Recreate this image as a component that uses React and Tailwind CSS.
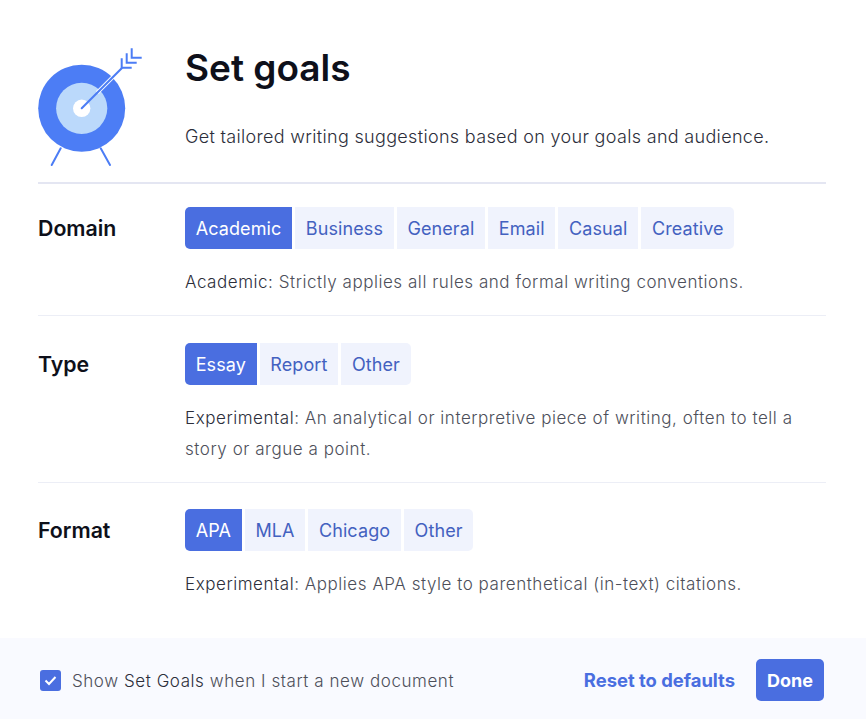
const BLUE = "bg-[#4a6ee0]";

function Target() {
  return (
    <svg width="106" height="120" viewBox="0 0 106 120" fill="none">
      <path d="M22.7 102.3L13.7 119M62.7 102.3L72 119" stroke="#4c7df5" strokeWidth="2" strokeLinecap="round" />
      <circle cx="43.7" cy="62.3" r="43.5" fill="#4c7df5" />
      <circle cx="43.7" cy="62.3" r="25.6" fill="#bbd9fb" />
      <circle cx="43.7" cy="62.3" r="8.7" fill="#fff" />
      <path d="M59.3 46.7L75.3 30.7" stroke="#fff" strokeWidth="4" />
      <path d="M43.7 62.3L83.7 22.3" stroke="#4c7df5" strokeWidth="2" strokeLinecap="round" />
      <path d="M83.7 12.3V21.7H93.7M88.7 7.3V16.7H98.7M93.7 2.3V11.7H103.7" stroke="#4c7df5" strokeWidth="2" />
    </svg>
  );
}

function Chips({ items }) {
  return (
    <div className="flex gap-[3px]">
      {items.map((item, index) => (
        <div
          key={item}
          className={`h-[42px] px-[10.7px] flex items-center text-[18px] tracking-[0.1px] ${
            index === 0 ? `${BLUE} text-white rounded-l-[5px]` : "bg-[#f0f3fd] text-[#4361c0]"
          } ${index === items.length - 1 ? "rounded-r-[5px]" : ""}`}
        >
          {item}
        </div>
      ))}
    </div>
  );
}

function Row({ label, items, children, className }) {
  return (
    <div className={`flex ${className}`}>
      <div className="w-[147px] text-[21.3px] font-semibold text-[#0e101a] leading-[42px]">{label}</div>
      <div className="flex-1">
        <Chips items={items} />
        <p className="mt-[18px] text-[17px] tracking-[0.54px] leading-[31px] font-light text-[#4d4f5a]">{children}</p>
      </div>
    </div>
  );
}

export default function App() {
  return (
    <div className="w-[866px] h-[719px] bg-white flex flex-col font-['Inter',sans-serif]">
      <div className="flex-1 pl-[38px] pr-[40px]">
        <div className="h-[184px] flex border-b-2 border-[#e4e6f2]">
          <div className="w-[147px] pt-[46px] shrink-0">
            <Target />
          </div>
          <div>
            <h1 className="mt-[42px] text-[37px] leading-[52px] font-semibold text-[#0e101a]">Set goals</h1>
            <p className="mt-[29px] text-[18px] tracking-[0.32px] leading-[28px] font-[350] text-[#2c2e3a]">
              Get tailored writing suggestions based on your goals and audience.
            </p>
          </div>
        </div>
        <Row
          label="Domain"
          items={["Academic", "Business", "General", "Email", "Casual", "Creative"]}
          className="pt-[23px] h-[132px] border-b border-[#eceef6]"
        >
          <span className="font-[350] text-[#2c2e3a]">Academic:</span> Strictly applies all rules and formal writing conventions.
        </Row>
        <Row
          label="Type"
          items={["Essay", "Report", "Other"]}
          className="pt-[27px] h-[167px] border-b border-[#eceef6]"
        >
          <span className="font-[350] text-[#2c2e3a]">Experimental</span>: An analytical or interpretive piece of writing, often to tell a story or argue a point.
        </Row>
        <Row label="Format" items={["APA", "MLA", "Chicago", "Other"]} className="pt-[26px]">
          <span className="font-[350] text-[#2c2e3a]">Experimental</span>: Applies APA style to parenthetical (in-text) citations.
        </Row>
      </div>
      <div className="h-[81px] bg-[#f9faff] pt-[3px] pl-[40px] pr-[42px] flex items-center">
        <div className={`w-[21px] h-[21px] rounded-[3px] ${BLUE} flex items-center justify-center`}>
          <svg width="13" height="11" viewBox="0 0 13 11" fill="none">
            <path d="M1.5 5.5L5 9L11.5 2" stroke="#fff" strokeWidth="2" />
          </svg>
        </div>
        <p className="ml-[11px] pt-[3px] text-[17px] tracking-[0.56px] font-light text-[#4d4f5a]">
          Show <span className="font-[350] text-[#2c2e3a]">Set Goals</span> when I start a new document
        </p>
        <button className="ml-auto pt-[2px] text-[18.4px] font-bold text-[#4a6ee0]">Reset to defaults</button>
        <button className={`ml-[21px] w-[68px] h-[42px] rounded-[5px] ${BLUE} text-white text-[18px] font-bold`}>Done</button>
      </div>
    </div>
  );
}
